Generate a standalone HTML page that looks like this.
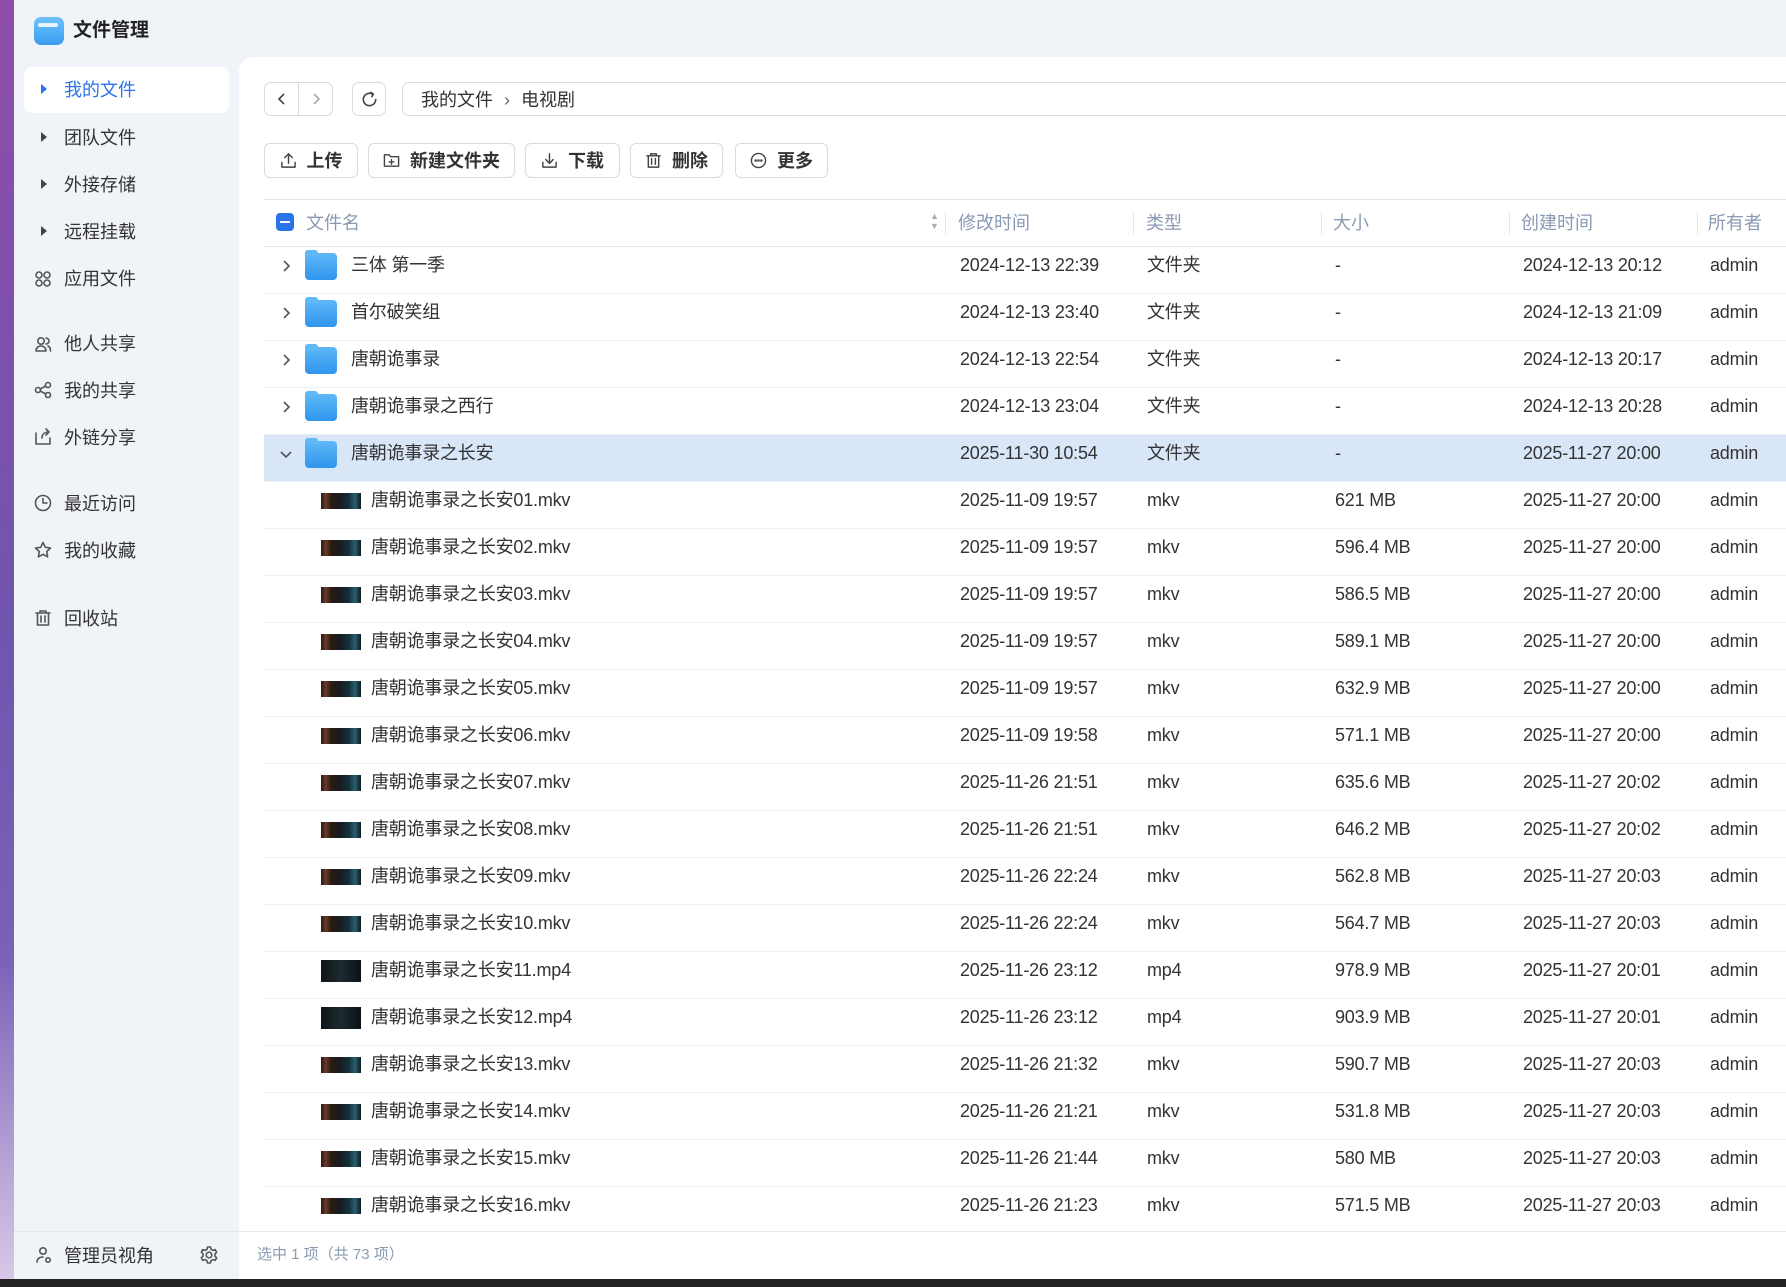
<!DOCTYPE html>
<html><head><meta charset="utf-8"><style>
*{margin:0;padding:0;box-sizing:border-box}
body{width:1786px;height:1287px;overflow:hidden;background:#f0f3f8;font-family:"Liberation Sans","Noto Sans CJK SC",sans-serif;color:#333;position:relative}
.strip{position:absolute;left:0;top:0;width:14px;height:1280px;background:linear-gradient(#8e4caa,#6f55ad 50%,#7a62b8 75%,#d9c8e6)}
.a{position:absolute;white-space:nowrap}
.nav{position:absolute;left:64px;font-size:18px;color:#333;line-height:24px}
.tri{position:absolute;left:41px;width:0;height:0;border-left:6px solid #444;border-top:5px solid transparent;border-bottom:5px solid transparent}
.ic{position:absolute;left:34px;width:18px;height:18px;fill:none;stroke:#555;stroke-width:1.6;stroke-linecap:round;stroke-linejoin:round}
.card{position:absolute;left:239px;top:57px;right:0;height:1174px;background:#fff;border-top-left-radius:14px}
.btn{position:absolute;top:143px;height:35px;border:1px solid #d6dbe3;border-radius:6px;background:#fff;font-size:18px;font-weight:bold;color:#333;display:flex;align-items:center;justify-content:center;gap:10px;line-height:20px}
.btn svg{width:17px;height:17px;fill:none;stroke:#444;stroke-width:1.5;stroke-linecap:round;stroke-linejoin:round}
.row{position:absolute;left:264px;right:0;height:47px;border-bottom:1px solid #edf0f4;font-size:18px;color:#333}
.row span{position:absolute;top:8px;line-height:21px;white-space:nowrap;letter-spacing:-0.2px}
.th{position:absolute;left:57px;top:11px;width:40px;height:16px;background:linear-gradient(90deg,#2a1812,#6a3a28 12%,#2a1a14 25%,#1a1a1e 45%,#12313a 70%,#2a6070 85%,#0d1a20)}
.th.m{top:8px;height:22px;background:linear-gradient(90deg,#101418,#1c2a30 50%,#0c1216)}
.fd{position:absolute;left:41px;top:6px;width:32px;height:27px;border-radius:4px;background:linear-gradient(#5fb8f7,#2f95ee)}
.fd:before{content:"";position:absolute;left:0;top:-3px;width:13px;height:6px;border-radius:3px 3px 0 0;background:#5fb8f7}
.chev{position:absolute;left:16px;top:13px;width:12px;height:12px;fill:none;stroke:#555;stroke-width:1.6}
.hd{position:absolute;top:212px;font-size:18px;color:#8a9ab3;line-height:22px}
.dv{position:absolute;top:212px;width:1px;height:22px;background:#e3e7ed}
</style></head><body>
<div class="strip"></div>
<div class="a" style="left:34px;top:17px;width:30px;height:28px;border-radius:7px;background:linear-gradient(#6cc2fb,#3a9cf0)"><div style="position:absolute;left:4px;top:6px;width:20px;height:4px;border-radius:2px;background:#e6f4ff"></div></div>
<div class="a" style="left:73px;top:19px;font-size:19px;font-weight:bold;color:#222;line-height:24px">文件管理</div>

<div class="a" style="left:24px;top:67px;width:205px;height:46px;background:#fff;border-radius:8px"></div>
<div class="tri" style="top:84px;border-left-color:#2a73e8"></div><div class="nav" style="top:78px;color:#2a73e8">我的文件</div>
<div class="tri" style="top:132px"></div><div class="nav" style="top:126px">团队文件</div>
<div class="tri" style="top:179px"></div><div class="nav" style="top:173px">外接存储</div>
<div class="tri" style="top:226px"></div><div class="nav" style="top:220px">远程挂载</div>
<svg class="ic" style="top:270px" viewBox="0 0 18 18"><circle cx="5" cy="5" r="3"/><circle cx="13" cy="5" r="3"/><circle cx="5" cy="13" r="3"/><circle cx="13" cy="13" r="3"/></svg><div class="nav" style="top:267px">应用文件</div>
<svg class="ic" style="top:335px" viewBox="0 0 18 18"><circle cx="7" cy="6" r="3.2"/><path d="M2 16c0-3 2.2-5 5-5s5 2 5 5H2z"/><path d="M12 3a3 3 0 0 1 0 6M14 11c1.5.6 2.5 2.3 2.5 5"/></svg><div class="nav" style="top:332px">他人共享</div>
<svg class="ic" style="top:381px" viewBox="0 0 18 18"><circle cx="4" cy="9" r="2.5"/><circle cx="14" cy="4" r="2.5"/><circle cx="14" cy="14" r="2.5"/><path d="M6.2 8l5.6-3M6.2 10l5.6 3"/></svg><div class="nav" style="top:379px">我的共享</div>
<svg class="ic" style="top:428px" viewBox="0 0 18 18"><path d="M2 5v11h14v-6"/><path d="M8 10c0-4 3-6 7-6M12 1l3 3-3 3"/></svg><div class="nav" style="top:426px">外链分享</div>
<svg class="ic" style="top:494px" viewBox="0 0 18 18"><circle cx="9" cy="9" r="7.5"/><path d="M9 4.5V9h4"/></svg><div class="nav" style="top:492px">最近访问</div>
<svg class="ic" style="top:541px" viewBox="0 0 18 18"><path d="M9 1.5l2.3 4.8 5.2.7-3.8 3.6.9 5.2L9 13.3l-4.6 2.5.9-5.2L1.5 7l5.2-.7z"/></svg><div class="nav" style="top:539px">我的收藏</div>
<svg class="ic" style="top:609px" viewBox="0 0 18 18"><path d="M2 4h14M6 4V2h6v2M3.5 4v12h11V4M7 7v6M11 7v6"/></svg><div class="nav" style="top:607px">回收站</div>

<div class="a" style="left:14px;top:1231px;width:225px;height:1px;background:#e3e7ed"></div>
<svg class="ic" style="top:1246px;left:35px" viewBox="0 0 18 18"><circle cx="8" cy="5" r="3.2"/><path d="M2 16c0-3 2.5-5 6-5"/><circle cx="13" cy="14" r="2.2"/></svg>
<div class="nav" style="top:1244px">管理员视角</div>
<svg class="ic" style="top:1245px;left:199px;width:20px;height:20px" viewBox="0 0 20 20"><circle cx="10" cy="10" r="2.8"/><path d="M8.5 2h3l.5 2.3 2 1.1 2.2-.8 1.5 2.6-1.7 1.6v2.4l1.7 1.6-1.5 2.6-2.2-.8-2 1.1-.5 2.3h-3L8 15.7l-2-1.1-2.2.8-1.5-2.6L4 11.2V8.8L2.3 7.2l1.5-2.6 2.2.8 2-1.1z"/></svg>
<div class="a" style="left:0;top:1279px;width:1786px;height:8px;background:#222"></div>

<div class="card"></div>
<div class="a" style="left:264px;top:82px;width:69px;height:34px;border:1px solid #d6dbe3;border-radius:7px;background:#fff"><div style="position:absolute;left:33px;top:0;width:1px;height:32px;background:#d6dbe3"></div>
<svg style="position:absolute;left:11px;top:10px;width:12px;height:12px;fill:none;stroke:#444;stroke-width:1.6" viewBox="0 0 12 12"><path d="M8 1L3 6l5 5"/></svg>
<svg style="position:absolute;left:45px;top:10px;width:12px;height:12px;fill:none;stroke:#aaa;stroke-width:1.6" viewBox="0 0 12 12"><path d="M4 1l5 5-5 5"/></svg></div>
<div class="a" style="left:352px;top:82px;width:34px;height:34px;border:1px solid #d6dbe3;border-radius:7px;background:#fff"><svg style="position:absolute;left:7px;top:7px;width:19px;height:19px;fill:none;stroke:#444;stroke-width:1.7;stroke-linecap:round" viewBox="0 0 20 20"><path d="M16.5 10A6.5 6.5 0 1 1 13 4.2"/><path d="M11.5 2.5l2.5 1.8-1.5 2.7"/></svg></div>
<div class="a" style="left:402px;top:82px;width:1400px;height:34px;border:1px solid #d6dbe3;border-radius:7px;background:#fff;font-size:18px;color:#333;padding:6px 18px;line-height:22px">我的文件 <span style="color:#666;margin:0 6px">›</span> 电视剧</div>

<div class="btn" style="left:264px;width:94px"><svg viewBox="0 0 18 18"><path d="M9 12V2M5 6l4-4 4 4M2 11v5h14v-5"/></svg>上传</div>
<div class="btn" style="left:368px;width:147px"><svg viewBox="0 0 18 18"><path d="M1.5 3h5l1.5 2h8.5v10h-15z"/><path d="M9 8v5M6.5 10.5h5"/></svg>新建文件夹</div>
<div class="btn" style="left:525px;width:95px"><svg viewBox="0 0 18 18"><path d="M9 2v10M5 8l4 4 4-4M2 11v5h14v-5"/></svg>下载</div>
<div class="btn" style="left:630px;width:93px"><svg viewBox="0 0 18 18"><path d="M2 4h14M6 4V2h6v2M3.5 4v12h11V4M7 7v6M11 7v6"/></svg>删除</div>
<div class="btn" style="left:735px;width:93px"><svg viewBox="0 0 18 18"><circle cx="9" cy="9" r="7.5"/><circle cx="6" cy="9" r=".6"/><circle cx="9" cy="9" r=".6"/><circle cx="12" cy="9" r=".6"/></svg>更多</div>

<div class="a" style="left:264px;top:199px;width:1522px;height:1px;background:#e3e7ed"></div>
<div class="a" style="left:276px;top:213px;width:18px;height:18px;border-radius:4px;background:#2a73e8"><div style="position:absolute;left:4px;top:8px;width:10px;height:2px;background:#fff"></div></div>
<div class="hd" style="left:306px">文件名</div>
<div class="a" style="left:930px;top:211px;font-size:9px;color:#aab;line-height:10px">▲<br>▼</div>
<div class="dv" style="left:945px"></div><div class="hd" style="left:958px">修改时间</div>
<div class="dv" style="left:1133px"></div><div class="hd" style="left:1146px">类型</div>
<div class="dv" style="left:1321px"></div><div class="hd" style="left:1333px">大小</div>
<div class="dv" style="left:1509px"></div><div class="hd" style="left:1521px">创建时间</div>
<div class="dv" style="left:1697px"></div><div class="hd" style="left:1708px">所有者</div>
<div class="a" style="left:264px;top:246px;width:1522px;height:1px;background:#e3e7ed"></div>

<div class="row" style="top:247px"><svg class="chev" viewBox="0 0 12 12"><path d="M4 1l5 5-5 5"/></svg><div class="fd"></div><span style="left:87px">三体 第一季</span><span style="left:696px">2024-12-13 22:39</span><span style="left:883px">文件夹</span><span style="left:1071px">-</span><span style="left:1259px">2024-12-13 20:12</span><span style="left:1446px">admin</span></div>
<div class="row" style="top:294px"><svg class="chev" viewBox="0 0 12 12"><path d="M4 1l5 5-5 5"/></svg><div class="fd"></div><span style="left:87px">首尔破笑组</span><span style="left:696px">2024-12-13 23:40</span><span style="left:883px">文件夹</span><span style="left:1071px">-</span><span style="left:1259px">2024-12-13 21:09</span><span style="left:1446px">admin</span></div>
<div class="row" style="top:341px"><svg class="chev" viewBox="0 0 12 12"><path d="M4 1l5 5-5 5"/></svg><div class="fd"></div><span style="left:87px">唐朝诡事录</span><span style="left:696px">2024-12-13 22:54</span><span style="left:883px">文件夹</span><span style="left:1071px">-</span><span style="left:1259px">2024-12-13 20:17</span><span style="left:1446px">admin</span></div>
<div class="row" style="top:388px"><svg class="chev" viewBox="0 0 12 12"><path d="M4 1l5 5-5 5"/></svg><div class="fd"></div><span style="left:87px">唐朝诡事录之西行</span><span style="left:696px">2024-12-13 23:04</span><span style="left:883px">文件夹</span><span style="left:1071px">-</span><span style="left:1259px">2024-12-13 20:28</span><span style="left:1446px">admin</span></div>
<div class="row" style="top:435px;background:#d8e6f8"><svg class="chev" viewBox="0 0 12 12"><path d="M1 4l5 5 5-5"/></svg><div class="fd"></div><span style="left:87px">唐朝诡事录之长安</span><span style="left:696px">2025-11-30 10:54</span><span style="left:883px">文件夹</span><span style="left:1071px">-</span><span style="left:1259px">2025-11-27 20:00</span><span style="left:1446px">admin</span></div>
<div class="row" style="top:482px"><div class="th"></div><span style="left:107px">唐朝诡事录之长安01.mkv</span><span style="left:696px">2025-11-09 19:57</span><span style="left:883px">mkv</span><span style="left:1071px">621 MB</span><span style="left:1259px">2025-11-27 20:00</span><span style="left:1446px">admin</span></div>
<div class="row" style="top:529px"><div class="th"></div><span style="left:107px">唐朝诡事录之长安02.mkv</span><span style="left:696px">2025-11-09 19:57</span><span style="left:883px">mkv</span><span style="left:1071px">596.4 MB</span><span style="left:1259px">2025-11-27 20:00</span><span style="left:1446px">admin</span></div>
<div class="row" style="top:576px"><div class="th"></div><span style="left:107px">唐朝诡事录之长安03.mkv</span><span style="left:696px">2025-11-09 19:57</span><span style="left:883px">mkv</span><span style="left:1071px">586.5 MB</span><span style="left:1259px">2025-11-27 20:00</span><span style="left:1446px">admin</span></div>
<div class="row" style="top:623px"><div class="th"></div><span style="left:107px">唐朝诡事录之长安04.mkv</span><span style="left:696px">2025-11-09 19:57</span><span style="left:883px">mkv</span><span style="left:1071px">589.1 MB</span><span style="left:1259px">2025-11-27 20:00</span><span style="left:1446px">admin</span></div>
<div class="row" style="top:670px"><div class="th"></div><span style="left:107px">唐朝诡事录之长安05.mkv</span><span style="left:696px">2025-11-09 19:57</span><span style="left:883px">mkv</span><span style="left:1071px">632.9 MB</span><span style="left:1259px">2025-11-27 20:00</span><span style="left:1446px">admin</span></div>
<div class="row" style="top:717px"><div class="th"></div><span style="left:107px">唐朝诡事录之长安06.mkv</span><span style="left:696px">2025-11-09 19:58</span><span style="left:883px">mkv</span><span style="left:1071px">571.1 MB</span><span style="left:1259px">2025-11-27 20:00</span><span style="left:1446px">admin</span></div>
<div class="row" style="top:764px"><div class="th"></div><span style="left:107px">唐朝诡事录之长安07.mkv</span><span style="left:696px">2025-11-26 21:51</span><span style="left:883px">mkv</span><span style="left:1071px">635.6 MB</span><span style="left:1259px">2025-11-27 20:02</span><span style="left:1446px">admin</span></div>
<div class="row" style="top:811px"><div class="th"></div><span style="left:107px">唐朝诡事录之长安08.mkv</span><span style="left:696px">2025-11-26 21:51</span><span style="left:883px">mkv</span><span style="left:1071px">646.2 MB</span><span style="left:1259px">2025-11-27 20:02</span><span style="left:1446px">admin</span></div>
<div class="row" style="top:858px"><div class="th"></div><span style="left:107px">唐朝诡事录之长安09.mkv</span><span style="left:696px">2025-11-26 22:24</span><span style="left:883px">mkv</span><span style="left:1071px">562.8 MB</span><span style="left:1259px">2025-11-27 20:03</span><span style="left:1446px">admin</span></div>
<div class="row" style="top:905px"><div class="th"></div><span style="left:107px">唐朝诡事录之长安10.mkv</span><span style="left:696px">2025-11-26 22:24</span><span style="left:883px">mkv</span><span style="left:1071px">564.7 MB</span><span style="left:1259px">2025-11-27 20:03</span><span style="left:1446px">admin</span></div>
<div class="row" style="top:952px"><div class="th m"></div><span style="left:107px">唐朝诡事录之长安11.mp4</span><span style="left:696px">2025-11-26 23:12</span><span style="left:883px">mp4</span><span style="left:1071px">978.9 MB</span><span style="left:1259px">2025-11-27 20:01</span><span style="left:1446px">admin</span></div>
<div class="row" style="top:999px"><div class="th m"></div><span style="left:107px">唐朝诡事录之长安12.mp4</span><span style="left:696px">2025-11-26 23:12</span><span style="left:883px">mp4</span><span style="left:1071px">903.9 MB</span><span style="left:1259px">2025-11-27 20:01</span><span style="left:1446px">admin</span></div>
<div class="row" style="top:1046px"><div class="th"></div><span style="left:107px">唐朝诡事录之长安13.mkv</span><span style="left:696px">2025-11-26 21:32</span><span style="left:883px">mkv</span><span style="left:1071px">590.7 MB</span><span style="left:1259px">2025-11-27 20:03</span><span style="left:1446px">admin</span></div>
<div class="row" style="top:1093px"><div class="th"></div><span style="left:107px">唐朝诡事录之长安14.mkv</span><span style="left:696px">2025-11-26 21:21</span><span style="left:883px">mkv</span><span style="left:1071px">531.8 MB</span><span style="left:1259px">2025-11-27 20:03</span><span style="left:1446px">admin</span></div>
<div class="row" style="top:1140px"><div class="th"></div><span style="left:107px">唐朝诡事录之长安15.mkv</span><span style="left:696px">2025-11-26 21:44</span><span style="left:883px">mkv</span><span style="left:1071px">580 MB</span><span style="left:1259px">2025-11-27 20:03</span><span style="left:1446px">admin</span></div>
<div class="row" style="top:1187px;border-bottom:none"><div class="th"></div><span style="left:107px">唐朝诡事录之长安16.mkv</span><span style="left:696px">2025-11-26 21:23</span><span style="left:883px">mkv</span><span style="left:1071px">571.5 MB</span><span style="left:1259px">2025-11-27 20:03</span><span style="left:1446px">admin</span></div>

<div class="a" style="left:239px;top:1231px;width:1547px;height:48px;background:#fff;border-top:1px solid #e6e9ee"></div>
<div class="a" style="left:257px;top:1245px;font-size:15px;color:#8a9ab3;line-height:20px">选中 1 项（共 73 项）</div>
</body></html>
